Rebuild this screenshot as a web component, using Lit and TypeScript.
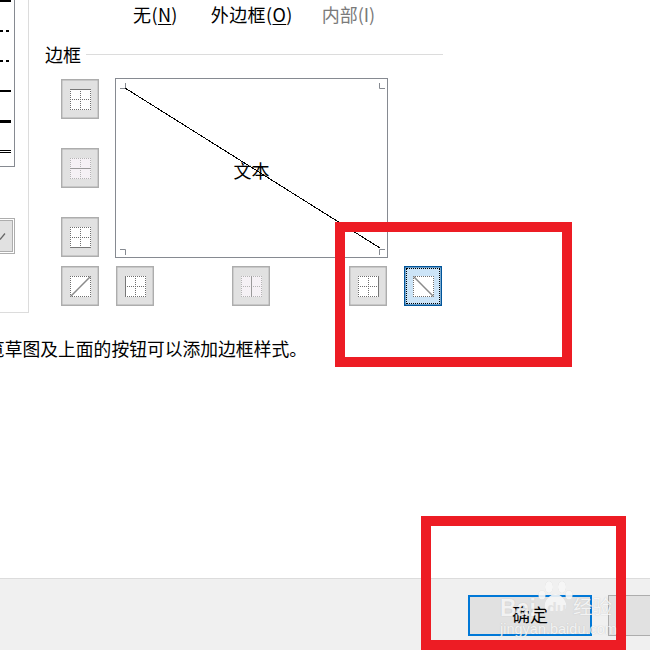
import { LitElement, html, css, svg } from "lit";
import { customElement } from "lit/decorators.js";

type Line = "top" | "midH" | "bottom" | "up" | "left" | "midV" | "right" | "down";

const LINES: Record<Line, [number, number, number, number]> = {
  top: [0, 0.5, 21, 0.5],
  midH: [0, 10.5, 21, 10.5],
  bottom: [0, 20.5, 21, 20.5],
  up: [0.5, 20.5, 20.5, 0.5],
  left: [0.5, 0, 0.5, 21],
  midV: [10.5, 0, 10.5, 21],
  right: [20.5, 0, 20.5, 21],
  down: [0.5, 0.5, 20.5, 20.5],
};

@customElement("border-btn")
class BorderBtn extends LitElement {
  static properties = {
    line: {},
    disabled: { type: Boolean, reflect: true },
    selected: { type: Boolean, reflect: true },
  };
  declare line: Line;
  declare disabled: boolean;
  declare selected: boolean;

  static styles = css`
    :host {
      display: flex;
      align-items: center;
      justify-content: center;
      box-sizing: border-box;
      width: 38px;
      height: 40px;
      border: 1px solid #adadad;
      box-shadow: inset 0 0 0 0.4px #adadad;
      background: #e1e1e1;
      flex: none;
    }
    :host([selected]) {
      background: #cce4f7;
      border-color: #005499;
      box-shadow: inset 0 0 0 0.4px #005499;
      outline: 1px dotted #000;
      outline-offset: -3px;
    }
    svg {
      display: block;
    }
    .face {
      fill: #fff;
    }
    .dots {
      fill: none;
      stroke: #6e6e6e;
      stroke-width: 1;
      stroke-dasharray: 1 1;
    }
    .solid {
      stroke: #777;
      stroke-width: 1;
    }
    .wide {
      stroke-width: 1.5;
      stroke: #8a8a8a;
    }
    :host([disabled]) .face {
      fill: #f5f1f5;
    }
    :host([disabled]) .dots {
      stroke: #b4b4b4;
    }
    :host([disabled]) .solid {
      stroke: #9a9a9a;
    }
  `;

  render() {
    const [x1, y1, x2, y2] = LINES[this.line];
    const diagonal = this.line === "up" || this.line === "down";
    const outline = "M0 0.5H21M0 20.5H21M0.5 0V21M20.5 0V21";
    const inner = "M0 10.5H21M10.5 0V21";
    return html`<svg width="21" height="21" viewBox="0 0 21 21">
      <rect class="face" width="21" height="21"></rect>
      <path class="dots" d=${outline}></path>
      ${diagonal ? "" : svg`<path class="dots" d=${inner}></path>`}
      <line
        class=${diagonal ? "solid wide" : "solid"}
        x1=${x1}
        y1=${y1}
        x2=${x2}
        y2=${y2}
      ></line>
    </svg>`;
  }
}

@customElement("app-root")
export class AppRoot extends LitElement {
  static styles = css`
    :host {
      display: flex;
      flex-direction: column;
      position: relative;
      width: 650px;
      height: 650px;
      overflow: hidden;
      background: #fff;
      color: #000;
      font: 18px/24px "Noto Sans CJK SC", "Noto Sans", sans-serif;
    }
    .main {
      display: flex;
      height: 578px;
      flex: none;
    }
    .side {
      box-sizing: border-box;
      display: flex;
      flex-direction: column;
      width: 29px;
      height: 313px;
      border-right: 1px solid #dcdcdc;
      border-bottom: 1px solid #dcdcdc;
      flex: none;
    }
    .styles {
      box-sizing: border-box;
      display: flex;
      flex-direction: column;
      width: 15px;
      height: 167px;
      border-right: 1px solid #868a91;
      border-bottom: 1px solid #868a91;
    }
    .ln {
      width: 11px;
      height: 2px;
      margin-top: 28px;
      background: #000;
      flex: none;
    }
    .ln.first {
      margin-top: 0;
    }
    .ln.dash {
      background: repeating-linear-gradient(90deg, #000 0 3px, transparent 3px 6px);
    }
    .ln.thick {
      height: 3px;
    }
    .ln.double {
      height: 3px;
      margin-top: 27px;
      background: none;
      border-top: 1px solid #000;
      border-bottom: 1px solid #000;
      box-sizing: border-box;
    }
    .color {
      box-sizing: border-box;
      width: 15px;
      height: 36px;
      margin-top: 51px;
      padding: 1px 1px 1px 0;
      border: 1px solid #adadad;
      border-left: 0;
    }
    .color-in {
      box-sizing: border-box;
      display: flex;
      align-items: center;
      height: 100%;
      border: 1px solid #adadad;
      border-left: 0;
      background: #e1e1e1;
    }
    .pane {
      display: flex;
      flex-direction: column;
      flex: 1;
      padding-left: 32px;
    }
    .presets {
      display: flex;
      height: 28px;
      margin-left: 72px;
      align-items: center;
      letter-spacing: 0.4px;
    }
    .presets span:nth-child(1) {
      margin-right: 33px;
    }
    .presets span:nth-child(2) {
      margin-right: 29px;
    }
    .off {
      color: #7a7a7a;
      letter-spacing: 0;
    }
    u {
      text-underline-offset: 2px;
    }
    .legend {
      display: flex;
      align-items: center;
      height: 52px;
      margin-left: -16px;
      width: 398px;
      gap: 5px;
    }
    .legend::after {
      content: "";
      flex: 1;
      height: 1px;
      background: #dcdcdc;
    }
    .editor {
      display: flex;
      gap: 16px;
      margin-top: -1px;
    }
    .column {
      display: flex;
      flex-direction: column;
      gap: 29px;
    }
    .preview {
      box-sizing: border-box;
      position: relative;
      display: flex;
      align-items: center;
      justify-content: center;
      width: 273px;
      height: 180px;
      margin-top: -1px;
      padding: 4px 0 0;
      border: 1px solid #868a91;
    }
    .preview svg {
      position: absolute;
      left: 0;
      top: 0;
    }
    .preview span {
      position: relative;
    }
    .row {
      display: flex;
      margin-top: 8px;
    }
    .g17 {
      margin-left: 17px;
    }
    .g78 {
      margin-left: 78px;
    }
    .g79 {
      margin-left: 79px;
    }
    .help {
      display: flex;
      justify-content: flex-end;
      width: 278px;
      margin: 30px 0 0 -32px;
      font-size: 17.8px;
      white-space: nowrap;
    }
    .footer {
      box-sizing: border-box;
      display: flex;
      flex: 1;
      gap: 16px;
      padding: 16px 0 0 468px;
      background: #f0f0f0;
      border-top: 1px solid #dcdcdc;
    }
    .btn {
      box-sizing: border-box;
      display: flex;
      align-items: center;
      justify-content: center;
      width: 124px;
      height: 41px;
      padding-bottom: 3px;
      flex: none;
      background: #e1e1e1;
      border: 1px solid #adadad;
    }
    .btn.primary {
      border: 2px solid #0078d7;
    }
    .mark {
      position: absolute;
      box-sizing: border-box;
      border: 10px solid #ed1c24;
    }
    .mark.a {
      left: 335px;
      top: 222px;
      width: 237px;
      height: 145px;
    }
    .mark.b {
      left: 421px;
      top: 516px;
      width: 205px;
      height: 134px;
    }
    .wm {
      position: absolute;
      color: rgba(255, 255, 255, 0.82);
      text-shadow: 0 0 1px rgba(150, 150, 150, 0.5);
      white-space: nowrap;
      font-family: "Liberation Sans", sans-serif;
    }
    .wm.bai {
      left: 500px;
      top: 595px;
      font-size: 23px;
      line-height: 26px;
      font-weight: 700;
    }
    .wm.du {
      left: 547px;
      top: 599px;
      font-size: 16px;
      line-height: 20px;
      font-weight: 700;
      color: #e2e2e2;
      text-shadow: none;
    }
    .wm.jy {
      left: 573px;
      top: 594px;
      font-size: 19.5px;
      line-height: 24px;
      font-family: "Noto Sans CJK SC", sans-serif;
    }
    .wm.url {
      left: 500px;
      top: 619px;
      font-size: 14.5px;
      line-height: 20px;
    }
    .paw {
      position: absolute;
      left: 538px;
      top: 580px;
      filter: drop-shadow(0 0 0.6px rgba(150, 150, 150, 0.5));
    }
  `;

  render() {
    return html`
      <div class="main">
        <div class="side">
          <div class="styles">
            <i class="ln first"></i>
            <i class="ln dash"></i>
            <i class="ln dash"></i>
            <i class="ln"></i>
            <i class="ln thick"></i>
            <i class="ln double"></i>
          </div>
          <div class="color">
            <div class="color-in">
              <svg width="7" height="8" viewBox="0 0 7 8">
                <path d="M0 7.5L5 1.5" fill="none" stroke="#666" stroke-width="1.2"></path>
              </svg>
            </div>
          </div>
        </div>
        <div class="pane">
          <div class="presets">
            <span>无(<u>N</u>)</span>
            <span>外边框(<u>O</u>)</span>
            <span class="off">内部(I)</span>
          </div>
          <div class="legend">边框</div>
          <div class="editor">
            <div class="column">
              <border-btn line="top"></border-btn>
              <border-btn line="midH" disabled></border-btn>
              <border-btn line="bottom"></border-btn>
            </div>
            <div class="preview">
              <svg width="271" height="178" viewBox="0 0 271 178" fill="none">
                <path
                  d="M4 9.5H9.5V4M263.5 4V9.5H269M4 170.5H9.5V176M269 170.5H263.5V176"
                  stroke="#868a91"
                ></path>
                <line x1="9" y1="9" x2="264" y2="169" stroke="#000" shape-rendering="crispEdges"></line>
              </svg>
              <span>文本</span>
            </div>
          </div>
          <div class="row">
            <border-btn line="up"></border-btn>
            <border-btn class="g17" line="left"></border-btn>
            <border-btn class="g78" line="midV" disabled></border-btn>
            <border-btn class="g79" line="right"></border-btn>
            <border-btn class="g17" line="down" selected></border-btn>
          </div>
          <div class="help"><span>单击预置选项、预览草图及上面的按钮可以添加边框样式。</span></div>
        </div>
      </div>
      <div class="footer">
        <div class="btn primary">确定</div>
        <div class="btn"></div>
      </div>

      <div class="mark a"></div>
      <div class="mark b"></div>

      <svg class="paw" width="35" height="38" viewBox="0 0 35 38" fill="rgba(255,255,255,.82)">
        <ellipse cx="4" cy="15" rx="3.5" ry="4.5"></ellipse>
        <ellipse cx="11" cy="7" rx="4" ry="6"></ellipse>
        <ellipse cx="24" cy="7" rx="4" ry="6"></ellipse>
        <ellipse cx="31" cy="15" rx="3.5" ry="4.5"></ellipse>
        <path d="M17.5 14c-5 0-11 6-11 12 0 6 7 5 11 5s11 1 11-5c0-6-6-12-11-12z"></path>
      </svg>
      <span class="wm bai">Bai</span>
      <span class="wm du">du</span>
      <span class="wm jy">经验</span>
      <span class="wm url">jingyan.baidu.com</span>
    `;
  }
}

void BorderBtn;
